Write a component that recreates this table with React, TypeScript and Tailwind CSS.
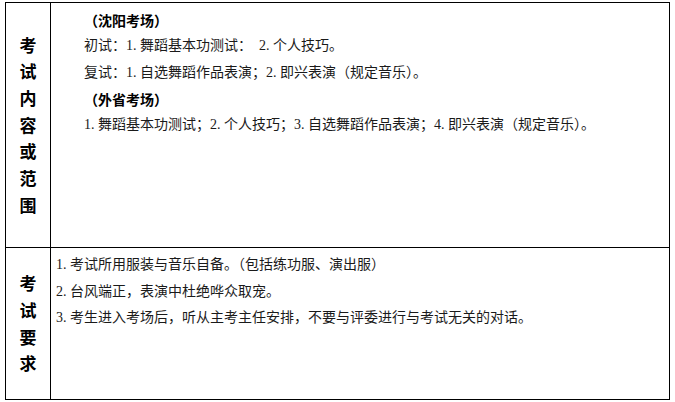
import React from "react";

function Label({ chars }: { chars: string }) {
  return (
    <div className="w-[45px] shrink-0 border-r border-black flex flex-col items-center justify-center font-['Noto_Sans_CJK_SC','Noto_Sans',sans-serif] text-[17px] font-bold leading-[26.7px] text-black">
      {chars.split("").map((c, i) => (
        <div key={i}>{c}</div>
      ))}
    </div>
  );
}

export default function App() {
  return (
    <div lang="zh-CN" className="w-[675px] h-[402px] bg-white pt-[2px] pl-[5px]">
      <div className="w-[665px] border border-black">
        <div className="flex h-[245px] border-b border-black">
          <Label chars="考试内容或范围" />
          <div className="flex-1 pl-[33px] pt-[4px] font-['Liberation_Serif','Noto_Sans_CJK_SC',serif] text-[14px] leading-[26.3px] text-[#1a1a1a] whitespace-pre">
            <div className="font-['Noto_Sans_CJK_SC',sans-serif] font-bold text-black">（沈阳考场）</div>
            <div>初试：1. 舞蹈基本功测试：  2. 个人技巧。</div>
            <div>复试：1. 自选舞蹈作品表演；2. 即兴表演（规定音乐）。</div>
            <div className="font-['Noto_Sans_CJK_SC',sans-serif] font-bold text-black">（外省考场）</div>
            <div>1. 舞蹈基本功测试；2. 个人技巧；3. 自选舞蹈作品表演；4. 即兴表演（规定音乐）。</div>
          </div>
        </div>
        <div className="flex h-[151px]">
          <Label chars="考试要求" />
          <div className="flex-1 pl-[5px] pt-[4px] font-['Liberation_Serif','Noto_Sans_CJK_SC',serif] text-[14px] leading-[26.5px] text-[#1a1a1a] whitespace-pre">
            <div>1. 考试所用服装与音乐自备。（包括练功服、演出服）</div>
            <div>2. 台风端正，表演中杜绝哗众取宠。</div>
            <div>3. 考生进入考场后，听从主考主任安排，不要与评委进行与考试无关的对话。</div>
          </div>
        </div>
      </div>
    </div>
  );
}
